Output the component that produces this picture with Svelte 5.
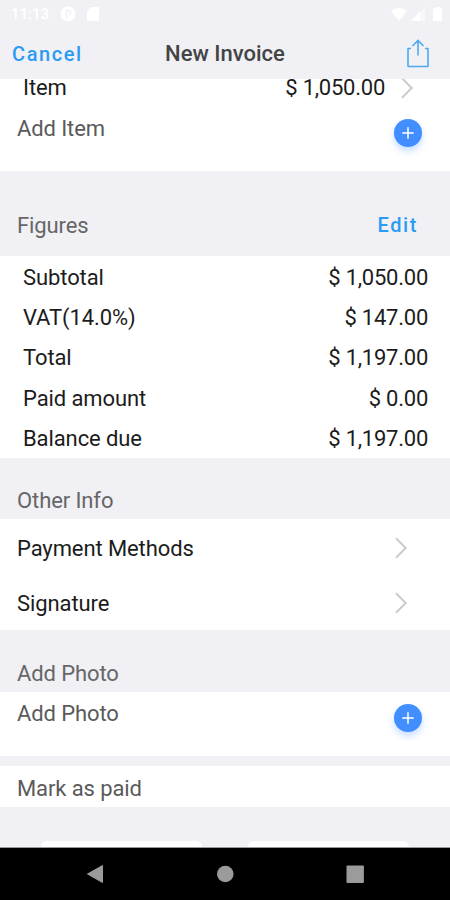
<script>
  const figures = [
    { label: "Subtotal", value: "$ 1,050.00" },
    { label: "VAT(14.0%)", value: "$ 147.00" },
    { label: "Total", value: "$ 1,197.00" },
    { label: "Paid amount", value: "$ 0.00" },
    { label: "Balance due", value: "$ 1,197.00" },
  ];
  const otherInfo = ["Payment Methods", "Signature"];
</script>

{#snippet chevron()}
  <svg class="chevron" width="14" height="22" viewBox="0 0 14 22">
    <path d="M2 1.2 L11.7 11 L2 20.8" fill="none" stroke="#cbcbcd" stroke-width="2" />
  </svg>
{/snippet}

{#snippet addButton()}
  <button class="add" aria-label="Add">
    <svg width="28" height="28" viewBox="0 0 28 28">
      <path d="M14 8.3V19.7M8.3 14H19.7" stroke="#fff" stroke-width="1.5" />
    </svg>
  </button>
{/snippet}

<div class="screen">
  <div class="statusBar">
    <div class="statusGroup left">
      <span class="clock">11:13</span>
      <svg width="16" height="16" viewBox="0 0 16 16">
        <circle cx="8" cy="8" r="7.5" fill="#fff" />
        <path d="M6.500 12V4.500H8.500Q10.500 4.500 10.500 6.500Q10.500 8 9 8.500" fill="none" stroke="#f0f0f5" stroke-width="1.400" />
      </svg>
      <svg width="12" height="14" viewBox="0 0 12 14">
        <path d="M4 0H11Q12 0 12 1V13Q12 14 11 14H1Q0 14 0 13V4Z" fill="#fff" />
      </svg>
    </div>
    <div class="statusGroup right">
      <svg width="16" height="13" viewBox="0 0 16 13">
        <path d="M0 3Q8 -3 16 3L8 13Z" fill="#fff" />
      </svg>
      <svg width="14" height="14" viewBox="0 0 14 14">
        <path d="M14 0V14H0Z" fill="#fff" opacity="0.5" />
        <path d="M9 5V14H0Z" fill="#fff" />
      </svg>
      <svg width="9" height="14" viewBox="0 0 9 14">
        <path d="M2.500 0H6.500V1.500H9V14H0V1.500H2.500Z" fill="#fff" />
      </svg>
    </div>
  </div>

  <header>
    <button class="link cancel">Cancel</button>
    <h1>New Invoice</h1>
    <button class="share" aria-label="Share">
      <svg width="24" height="30" viewBox="0 0 24 30">
        <path
          d="M5 9.500H2.500Q2 9.500 2 10V27Q2 27.500 2.500 27.500H21.500Q22 27.500 22 27V10Q22 9.500 21.500 9.500H19M12 16.500V2.500M6.500 7L12 1.500L17.500 7"
          fill="none"
          stroke="#4daaf2"
          stroke-width="1.600"
        />
      </svg>
    </button>
  </header>

  <section class="items">
    <div class="row item">
      <span>Item</span>
      <span class="price">$ 1,050.00</span>
      {@render chevron()}
    </div>
    <div class="row addRow">
      <span class="addItem">Add Item</span>
      {@render addButton()}
    </div>
  </section>

  <div class="sectionTitle figuresTitle">
    <h2>Figures</h2>
    <button class="link edit">Edit</button>
  </div>
  <section class="figures">
    {#each figures as figure}
      <div class="row figure">
        <span>{figure.label}</span>
        <span class="amount">{figure.value}</span>
      </div>
    {/each}
  </section>

  <div class="sectionTitle otherTitle">
    <h2>Other Info</h2>
  </div>
  <section class="other">
    {#each otherInfo as name}
      <div class="row info">
        <span>{name}</span>
        {@render chevron()}
      </div>
    {/each}
  </section>

  <div class="sectionTitle photoTitle">
    <h2>Add Photo</h2>
  </div>
  <section class="photo">
    <div class="row addRow">
      <span class="addPhoto">Add Photo</span>
      {@render addButton()}
    </div>
  </section>

  <section class="paid">Mark as paid</section>

  <div class="actions">
    <div class="action"></div>
    <div class="action"></div>
  </div>

  <nav>
    <svg width="18" height="20" viewBox="0 0 18 20">
      <path d="M16.500 1.500V18.500L1.500 10Z" fill="#9b9b9b" stroke="#9b9b9b" stroke-linejoin="round" />
    </svg>
    <svg width="18" height="18" viewBox="0 0 18 18">
      <circle cx="9.300" cy="9" r="8.300" fill="#9b9b9b" />
    </svg>
    <svg width="18" height="18" viewBox="0 0 18 18">
      <rect x="0.500" y="0.500" width="17.400" height="17.400" rx="1" fill="#9b9b9b" />
    </svg>
  </nav>
</div>

<style>
  :global(body) {
    margin: 0;
  }
  .screen {
    width: 450px;
    height: 900px;
    display: flex;
    flex-direction: column;
    overflow: hidden;
    background: #f0f0f5;
    color: #1c1c1c;
    font-family: Roboto, sans-serif;
    font-size: 22px;
    line-height: 26px;
    letter-spacing: -0.1px;
  }
  .screen > * {
    flex: none;
    box-sizing: border-box;
  }
  svg {
    display: block;
    flex: none;
  }
  button {
    border: none;
    background: none;
    padding: 0;
    margin: 0;
    font-family: inherit;
  }
  section {
    background: #fff;
  }
  .row {
    display: flex;
    align-items: center;
    box-sizing: border-box;
  }

  .statusBar {
    height: 28px;
    padding: 0 8px 0 11px;
    display: flex;
    justify-content: space-between;
    align-items: center;
  }
  .statusGroup {
    display: flex;
    align-items: center;
  }
  .left {
    gap: 11px;
  }
  .right {
    gap: 4px;
  }
  .right svg:last-child {
    margin-left: 4px;
  }
  .clock {
    color: #fff;
    font-size: 15px;
    font-weight: 500;
    letter-spacing: 0;
  }

  header {
    height: 51px;
    padding: 0 20px 0 12px;
    display: grid;
    grid-template-columns: 120px 1fr 120px;
    align-items: center;
  }
  .link {
    color: #2c9bf3;
    font-size: 20px;
    line-height: 26px;
    font-weight: 500;
    letter-spacing: 1.6px;
    text-align: left;
  }
  h1 {
    margin: 0 -4px 0 4px;
    color: #444;
    font-size: 22px;
    font-weight: 500;
    letter-spacing: 0;
    text-align: center;
    white-space: nowrap;
  }
  .share {
    justify-self: end;
  }

  .items {
    height: 92px;
    overflow: hidden;
  }
  .item {
    height: 18px;
    padding: 0 36px 0 23px;
  }
  .price {
    margin-left: auto;
    letter-spacing: -0.25px;
  }
  .item .chevron {
    margin-left: 15px;
  }
  .addRow {
    align-items: flex-start;
    justify-content: space-between;
    padding: 0 28.5px 0 17px;
    color: #5a5a5a;
  }
  .items .addRow {
    padding-top: 22px;
  }
  .addItem {
    margin-top: -3px;
  }
  .add {
    width: 28px;
    height: 28px;
    border-radius: 50%;
    background: #438eff;
    box-shadow: 0 4px 7px rgba(67, 142, 255, 0.3);
  }

  .sectionTitle {
    display: flex;
    justify-content: space-between;
    align-items: flex-end;
    padding: 0 32px 0 17px;
  }
  h2 {
    margin: 0;
    color: #666;
    font-size: 22px;
    font-weight: 400;
  }
  .figuresTitle {
    height: 85px;
    padding-bottom: 17px;
  }
  .edit {
    margin-bottom: 1px;
  }
  .otherTitle {
    height: 61px;
    padding-bottom: 5px;
  }
  .photoTitle {
    height: 62px;
    padding-bottom: 5px;
  }

  .figures {
    height: 202px;
  }
  .figure {
    height: 40.4px;
    justify-content: space-between;
    padding: 3px 22px 0 23px;
  }
  .amount {
    letter-spacing: -0.25px;
  }
  .other {
    height: 111px;
    padding-top: 1px;
  }
  .info {
    height: 55px;
    justify-content: space-between;
    padding: 0 42px 0 17px;
  }
  .info span {
    padding-top: 2px;
  }
  .photo {
    height: 64px;
    padding-top: 12px;
  }
  .addPhoto {
    margin-top: -3px;
  }
  .paid {
    height: 41px;
    margin-top: 10px;
    padding: 10px 17px 0;
    color: #5a5a5a;
  }

  .actions {
    height: 41px;
    padding: 34px 41px 0;
    display: flex;
    justify-content: space-between;
    border-bottom: 1px solid #999;
  }
  .action {
    width: 161px;
    height: 6px;
    border-radius: 6px 6px 0 0;
    background: #fff;
  }
  nav {
    height: 52px;
    padding: 0 86px;
    display: flex;
    align-items: center;
    justify-content: space-between;
    background: #000;
  }
</style>
